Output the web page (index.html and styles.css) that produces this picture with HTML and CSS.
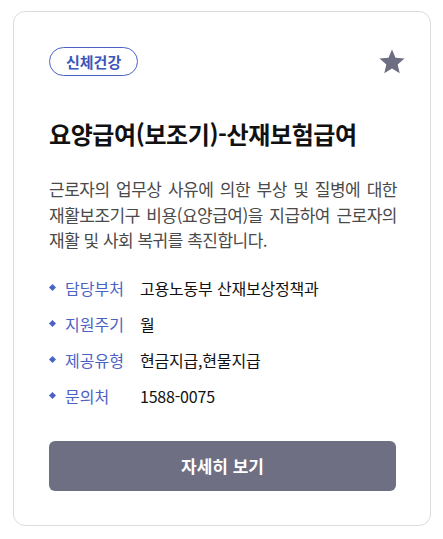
FILE: index.html
```html
<!DOCTYPE html>
<html lang="ko">
<head>
    <meta charset="UTF-8">
    <meta name="viewport" content="width=device-width, initial-scale=1.0">
    <title>요양급여(보조기)-산재보험급여</title>
    <link rel="stylesheet" href="styles.css">
</head>
<body>
    <div class="page">
        <div class="card">
            <div class="card-head">
                <span class="tag">신체건강</span>
                <svg class="star" viewBox="0 0 24 24" width="30" height="30" aria-label="즐겨찾기">
                    <path d="M12 17.27L18.18 21l-1.64-7.03L22 9.24l-7.19-.61L12 2 9.19 8.63 2 9.24l5.46 4.73L5.82 21z" fill="#6e6e82"/>
                </svg>
            </div>

            <h2 class="title">요양급여(보조기)-산재보험급여</h2>

            <p class="desc">근로자의 업무상 사유에 의한 부상 및 질병에 대한 재활보조기구 비용(요양급여)을 지급하여 근로자의 재활 및 사회 복귀를 촉진합니다.</p>

            <ul class="info">
                <li><span class="label">담당부처</span><span class="value">고용노동부 산재보상정책과</span></li>
                <li><span class="label">지원주기</span><span class="value">월</span></li>
                <li><span class="label">제공유형</span><span class="value">현금지급,현물지급</span></li>
                <li><span class="label">문의처</span><span class="value">1588-0075</span></li>
            </ul>

            <button class="detail-btn" type="button">자세히 보기</button>
        </div>
    </div>
</body>
</html>
```

FILE: styles.css
```css
body {
    margin: 0;
    font-family: "Noto Sans CJK KR", "Noto Sans", sans-serif;
    background-color: #fff;
}
.page {
    padding: 11px 12px 12px 13px;
}
.card {
    border: 1px solid #dcdcdc;
    border-radius: 12px;
    padding: 35px 34px 34px 35px;
    background: #fff;
}
.card-head {
    display: flex;
    justify-content: space-between;
    align-items: center;
    height: 29px;
}
.tag {
    box-sizing: border-box;
    height: 29px;
    padding: 0 16px;
    border: 1px solid #4a63c4;
    border-radius: 15px;
    color: #3d56b8;
    font-size: 15px;
    font-weight: bold;
    line-height: 27px;
}
.star {
    margin-right: -11px;
}
.title {
    margin: 42px 0 0;
    font-size: 24px;
    font-weight: bold;
    line-height: 31px;
    color: #111;
    letter-spacing: -0.4px;
}
.desc {
    margin: 27px -1px 0 0;
    font-size: 17px;
    line-height: 25.5px;
    color: #4a4a4a;
    word-break: keep-all;
    letter-spacing: -0.5px;
    text-align: justify;
}
.info {
    list-style: none;
    margin: 17px 0 0;
    padding: 0;
}
.info li {
    display: flex;
    align-items: center;
    height: 36px;
    font-size: 16px;
}
.info li::before {
    content: "";
    width: 5px;
    height: 5px;
    margin: 0 10px 0 1px;
    background: #4a63c4;
    transform: rotate(45deg);
}
.label {
    width: 75px;
    color: #4b62c4;
}
.value {
    color: #111;
    letter-spacing: -0.2px;
}
.detail-btn {
    display: block;
    width: 100%;
    height: 50px;
    margin-top: 27px;
    border: none;
    border-radius: 6px;
    background: #6f6f83;
    color: #fff;
    font-family: inherit;
    font-size: 17px;
    font-weight: bold;
}
```
